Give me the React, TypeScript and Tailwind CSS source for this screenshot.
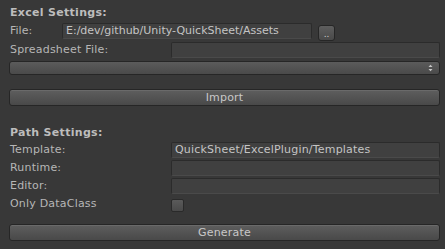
import React from "react";

const field = "h-[16px] bg-[#404040] border border-[#2b2b2b] border-b-[#4a4a4a] rounded-[2px] text-[#c4c4c4] pl-[3px] leading-[14px] overflow-hidden whitespace-nowrap";
const button = "h-[17px] rounded-[3px] border border-[#262626] bg-gradient-to-b from-[#5e5e5e] to-[#494949] shadow-[inset_0_1px_0_#6a6a6a] text-[#c8c8c8] flex items-center justify-center leading-none";

function Row({ label, gap, children }: { label: string; gap: string; children?: React.ReactNode }) {
  return (
    <div className={"flex items-center h-[16px] " + gap}>
      <div className="w-[162px] pl-[1px] shrink-0 tracking-[0.2px]">{label}</div>
      {children}
    </div>
  );
}

export default function App() {
  return (
    <div
      className="w-[445px] h-[249px] bg-[#383838] pl-[9px] pr-[5px] pt-[5px] text-[11px] text-[#b6b6b6] overflow-hidden"
      style={{ fontFamily: '"DejaVu Sans", sans-serif' }}
    >
      <div className="font-bold h-[15px] leading-[15px] pl-[1px] text-[#bdbdbd] tracking-[0.3px]">Excel Settings:</div>
      <div className="flex items-center h-[16px] mt-[3px]">
        <div className="w-[53px] pl-[1px] shrink-0">File:</div>
        <div className={field + " w-[250px]"}>E:/dev/github/Unity-QuickSheet/Assets</div>
        <div className="ml-[6px] mt-[3px] w-[17px] h-[16px] rounded-[3px] border border-[#262626] bg-gradient-to-b from-[#5e5e5e] to-[#494949] flex items-end justify-center text-[9px] leading-[11px] text-[#d0d0d0]">..</div>
      </div>
      <Row label="Spreadsheet File:" gap="mt-[3px]">
        <div className={field + " flex-1"}></div>
      </Row>
      <div className="mt-[3px] h-[14px] rounded-[3px] border border-[#262626] bg-gradient-to-b from-[#5b5b5b] to-[#4a4a4a] flex items-center justify-end pr-[6px]">
        <svg width="5" height="8" viewBox="0 0 5 8">
          <path d="M0.5 3 L2.5 0.8 L4.5 3 Z" fill="#c8c8c8" />
          <path d="M0.5 5 L2.5 7.2 L4.5 5 Z" fill="#c8c8c8" />
        </svg>
      </div>
      <div className={button + " mt-[14px] tracking-[0.2px]"}>Import</div>
      <div className="font-bold h-[15px] leading-[15px] pl-[1px] mt-[19px] text-[#bdbdbd] tracking-[0.3px]">Path Settings:</div>
      <Row label="Template:" gap="mt-[2px]">
        <div className={field + " flex-1 tracking-[0.2px]"}>QuickSheet/ExcelPlugin/Templates</div>
      </Row>
      <Row label="Runtime:" gap="mt-[2px]">
        <div className={field + " flex-1"}></div>
      </Row>
      <Row label="Editor:" gap="mt-[2px]">
        <div className={field + " flex-1"}></div>
      </Row>
      <Row label="Only DataClass" gap="mt-[2px]">
        <div className="w-[13px] h-[13px] mt-[2px] rounded-[2px] border border-[#2a2a2a] bg-gradient-to-b from-[#5a5a5a] to-[#4a4a4a]"></div>
      </Row>
      <div className={button + " mt-[12px] tracking-[0.2px]"}>Generate</div>
    </div>
  );
}
